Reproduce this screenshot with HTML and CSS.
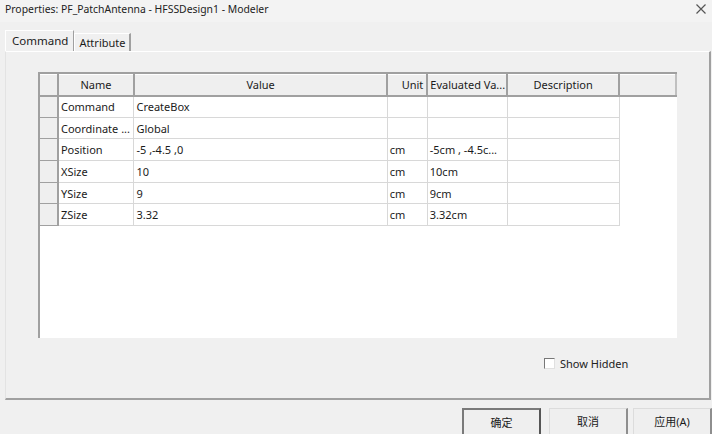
FILE: index.html
```
<!DOCTYPE html>
<html>
<head>
  <title>Properties: PF_PatchAntenna - HFSSDesign1 - Modeler</title>
  <link rel="stylesheet" href="styles.css">
</head>
<body>
  <div class="titlebar">
    <span class="title">Properties: PF_PatchAntenna - HFSSDesign1 - Modeler</span>
    <svg class="close" width="10" height="10" viewBox="0 0 10 10">
      <path d="M0.5 0.5 L9.5 9.5 M9.5 0.5 L0.5 9.5" stroke="#555" stroke-width="1.2" fill="none"/>
    </svg>
  </div>

  <div class="tabs">
    <div class="tab active">Command</div>
    <div class="tab">Attribute</div>
  </div>

  <div class="panel">
    <div class="grid-wrap">
      <table class="grid">
        <colgroup>
          <col class="c-hdr">
          <col class="c-name">
          <col class="c-value">
          <col class="c-unit">
          <col class="c-eval">
          <col class="c-desc">
          <col class="c-fill">
        </colgroup>
        <thead>
          <tr>
            <th class="corner"></th>
            <th>Name</th>
            <th>Value</th>
            <th class="right">Unit</th>
            <th class="left">Evaluated Va...</th>
            <th>Description</th>
            <th class="fill-hdr"></th>
          </tr>
        </thead>
        <tbody>
          <tr>
            <td class="rowhdr"></td><td>Command</td><td>CreateBox</td><td></td><td></td><td></td><td class="fill"></td>
          </tr>
          <tr>
            <td class="rowhdr"></td><td>Coordinate ...</td><td>Global</td><td></td><td></td><td></td><td class="fill"></td>
          </tr>
          <tr>
            <td class="rowhdr"></td><td>Position</td><td>-5 ,-4.5 ,0</td><td>cm</td><td>-5cm , -4.5c...</td><td></td><td class="fill"></td>
          </tr>
          <tr>
            <td class="rowhdr"></td><td>XSize</td><td>10</td><td>cm</td><td>10cm</td><td></td><td class="fill"></td>
          </tr>
          <tr>
            <td class="rowhdr"></td><td>YSize</td><td>9</td><td>cm</td><td>9cm</td><td></td><td class="fill"></td>
          </tr>
          <tr>
            <td class="rowhdr"></td><td>ZSize</td><td>3.32</td><td>cm</td><td>3.32cm</td><td></td><td class="fill"></td>
          </tr>
        </tbody>
      </table>
    </div>

    <label class="show-hidden">
      <span class="check"></span>
      Show Hidden
    </label>
  </div>

  <div class="buttons">
    <div class="btn default">确定</div>
    <div class="btn cancel">取消</div>
    <div class="btn">应用(A)</div>
  </div>
</body>
</html>
```

FILE: styles.css
```
* {
  box-sizing: border-box;
  margin: 0;
  padding: 0;
}

body {
  font-family: "Noto Sans", "Noto Sans CJK SC", sans-serif;
  font-size: 11px;
  color: #1b1b1b;
  background-color: #f0f0f0;
  width: 712px;
  height: 434px;
  overflow: hidden;
}

.titlebar {
  height: 22px;
  padding: 0 6px 4px 5px;
  display: flex;
  justify-content: space-between;
  align-items: center;
  background-color: #f3f3f3;
}

.title {
  font-size: 10.4px;
  color: #222;
}

.tabs {
  display: flex;
  align-items: flex-end;
  height: 29px;
  padding-left: 5px;
}

.tab {
  height: 18px;
  padding: 0 4px;
  line-height: 17px;
  border-top: 1px solid #fff;
  border-left: 1px solid #fff;
  border-right: 2px solid #a0a0a0;
}

.tab.active {
  height: 21px;
  padding: 0 5px 0 6px;
  font-size: 11.5px;
  line-height: 19px;
  border-left: 1px solid #fff;
  border-right: 1px solid #a0a0a0;
}

.panel {
  width: 706px;
  height: 349px;
  margin-left: 5px;
  border-top: 1px solid #fff;
  border-left: 1px solid #e3e3e3;
  border-right: 2px solid #a0a0a0;
  border-bottom: 2px solid #a0a0a0;
}

.grid-wrap {
  width: 639px;
  height: 266px;
  margin: 20px 0 0 32px;
  background-color: #fff;
  border-top: 2px solid #a0a0a0;
  border-left: 2px solid #a0a0a0;
  overflow: hidden;
}

.grid {
  border-collapse: collapse;
  table-layout: fixed;
}

.c-hdr { width: 18px; }
.c-name { width: 76px; }
.c-value { width: 254px; }
.c-unit { width: 40px; }
.c-eval { width: 80px; }
.c-desc { width: 112px; }
.c-fill { width: 57px; }

.grid th {
  height: 21px;
  font-weight: normal;
  background-color: #efefef;
  border-right: 2px solid #a0a0a0;
  border-bottom: 2px solid #a0a0a0;
  border-top: 1px solid #fff;
  text-align: center;
  white-space: nowrap;
  overflow: hidden;
}

.grid th.right {
  text-align: right;
  padding-right: 3px;
}

.grid th.left {
  text-align: left;
  padding-left: 2px;
}

.grid th.fill-hdr {
  border-right: 2px solid #c0c0c0;
}

.grid td {
  height: 21.7px;
  padding: 0 2px;
  border-right: 1px solid #d8d8d8;
  border-bottom: 1px solid #d8d8d8;
  white-space: nowrap;
  overflow: hidden;
}

.grid td.rowhdr {
  background-color: #efefef;
  border-right: 2px solid #a0a0a0;
  border-bottom: 1px solid #a0a0a0;
}

.grid td.fill {
  border: none;
}

.show-hidden {
  display: flex;
  align-items: center;
  gap: 5px;
  margin: 18px 0 0 538px;
  color: #222;
}

.check {
  width: 11px;
  height: 11px;
  background-color: #fff;
  border-top: 1px solid #777;
  border-left: 1px solid #777;
  border-right: 1px solid #e0e0e0;
  border-bottom: 1px solid #e0e0e0;
}

.buttons {
  display: flex;
  justify-content: flex-end;
  gap: 5px;
  padding-top: 8px;
}

.btn {
  width: 79px;
  height: 30px;
  padding-top: 4px;
  text-align: center;
  background-color: #efefef;
  border-top: 1px solid #dcdcdc;
  border-left: 1px solid #dcdcdc;
  border-right: 2px solid #8e8e8e;
  border-bottom: 2px solid #8e8e8e;
}

.btn.cancel {
  margin-left: 3px;
}

.btn.default {
  border: 2px solid #7a7a7a;
  border-right-color: #555;
  border-bottom-color: #555;
}
```
